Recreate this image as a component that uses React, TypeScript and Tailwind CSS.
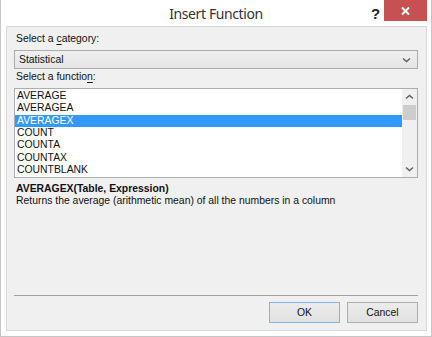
const functions = [
  "AVERAGE",
  "AVERAGEA",
  "AVERAGEX",
  "COUNT",
  "COUNTA",
  "COUNTAX",
  "COUNTBLANK",
];

function Chevron({ up = false }: { up?: boolean }) {
  return (
    <svg width="9" height="6" viewBox="0 0 9 6" className={up ? "rotate-180" : ""}>
      <path d="M1 1.5 L4.5 4.5 L8 1.5" fill="none" stroke="#606060" strokeWidth="1.5" />
    </svg>
  );
}

export default function App() {
  return (
    <div className="w-[432px] h-[337px] bg-white border-x border-b border-[#c6c6c6] flex flex-col font-['Liberation_Sans',Arial,sans-serif] text-[10.4px] text-[#111]">
      {/* title bar */}
      <div className="relative h-[26px] flex items-center justify-center shrink-0">
        <span className="font-['Noto_Sans',sans-serif] text-[14px] tracking-[-0.4px] text-[#333] leading-none pt-[1px]">
          Insert Function
        </span>
        <span className="absolute left-[370px] top-[3px] text-[15px] font-bold text-[#222] font-['Liberation_Sans',sans-serif]">
          ?
        </span>
        <div className="absolute left-[383px] top-0 w-[43px] h-[21px] bg-[#c75050] flex items-center justify-center">
          <svg width="9" height="8" viewBox="0 0 9 8">
            <path d="M1 0.5 L8 7.5 M8 0.5 L1 7.5" stroke="white" strokeWidth="2" />
          </svg>
        </div>
      </div>

      {/* body panel */}
      <div className="ml-[5px] mr-[4px] h-[305px] border border-[#d9d9d9] bg-[#f0f0f0] flex flex-col pl-[7px] pr-[8px] pt-[5px] pb-[7px]">
        <div className="h-[14px] leading-[14px] pl-[2px]">
          Select a <span className="underline underline-offset-2">c</span>ategory:
        </div>
        <div className="mt-[4px] h-[19px] border border-[#acacac] bg-gradient-to-b from-[#f0f0f0] to-[#e5e5e5] flex items-center pl-[4px] pr-[6px]">
          <span className="flex-1">Statistical</span>
          <Chevron />
        </div>
        <div className="mt-[1px] h-[14px] leading-[14px] pl-[2px]">
          Select a functio<span className="underline underline-offset-2">n</span>:
        </div>
        <div className="mt-[4px] h-[90px] border border-[#abadb3] bg-white flex">
          <div className="flex-1 flex flex-col pt-[1px]">
            {functions.map((f) => (
              <div
                key={f}
                className={
                  "h-[12.33px] leading-[12.33px] pl-[2px] " +
                  (f === "AVERAGEX" ? "bg-[#3399ff] text-white" : "")
                }
              >
                {f}
              </div>
            ))}
          </div>
          <div className="w-[15px] bg-[#f0f0f0] flex flex-col">
            <div className="h-[16px] flex items-center justify-center">
              <Chevron up />
            </div>
            <div className="h-[15px] mx-[1px] bg-[#cdcdcd]" />
            <div className="flex-1" />
            <div className="h-[16px] flex items-center justify-center">
              <Chevron />
            </div>
          </div>
        </div>
        <div className="mt-[5px] pl-[2px] leading-[12px]">
          <div className="font-bold">AVERAGEX(Table, Expression)</div>
          <div>Returns the average (arithmetic mean) of all the numbers in a column</div>
        </div>
        <div className="flex-1" />
        <div className="h-px bg-[#a0a0a0]" />
        <div className="mt-[6px] flex justify-end gap-[7px]">
          <button className="w-[71px] h-[21px] border border-[#7eb4ea] bg-gradient-to-b from-[#ececec] to-[#e1e1e1] flex items-center justify-center">
            OK
          </button>
          <button className="w-[71px] h-[21px] border border-[#adadad] bg-gradient-to-b from-[#ececec] to-[#e1e1e1] flex items-center justify-center">
            Cancel
          </button>
        </div>
      </div>
    </div>
  );
}
